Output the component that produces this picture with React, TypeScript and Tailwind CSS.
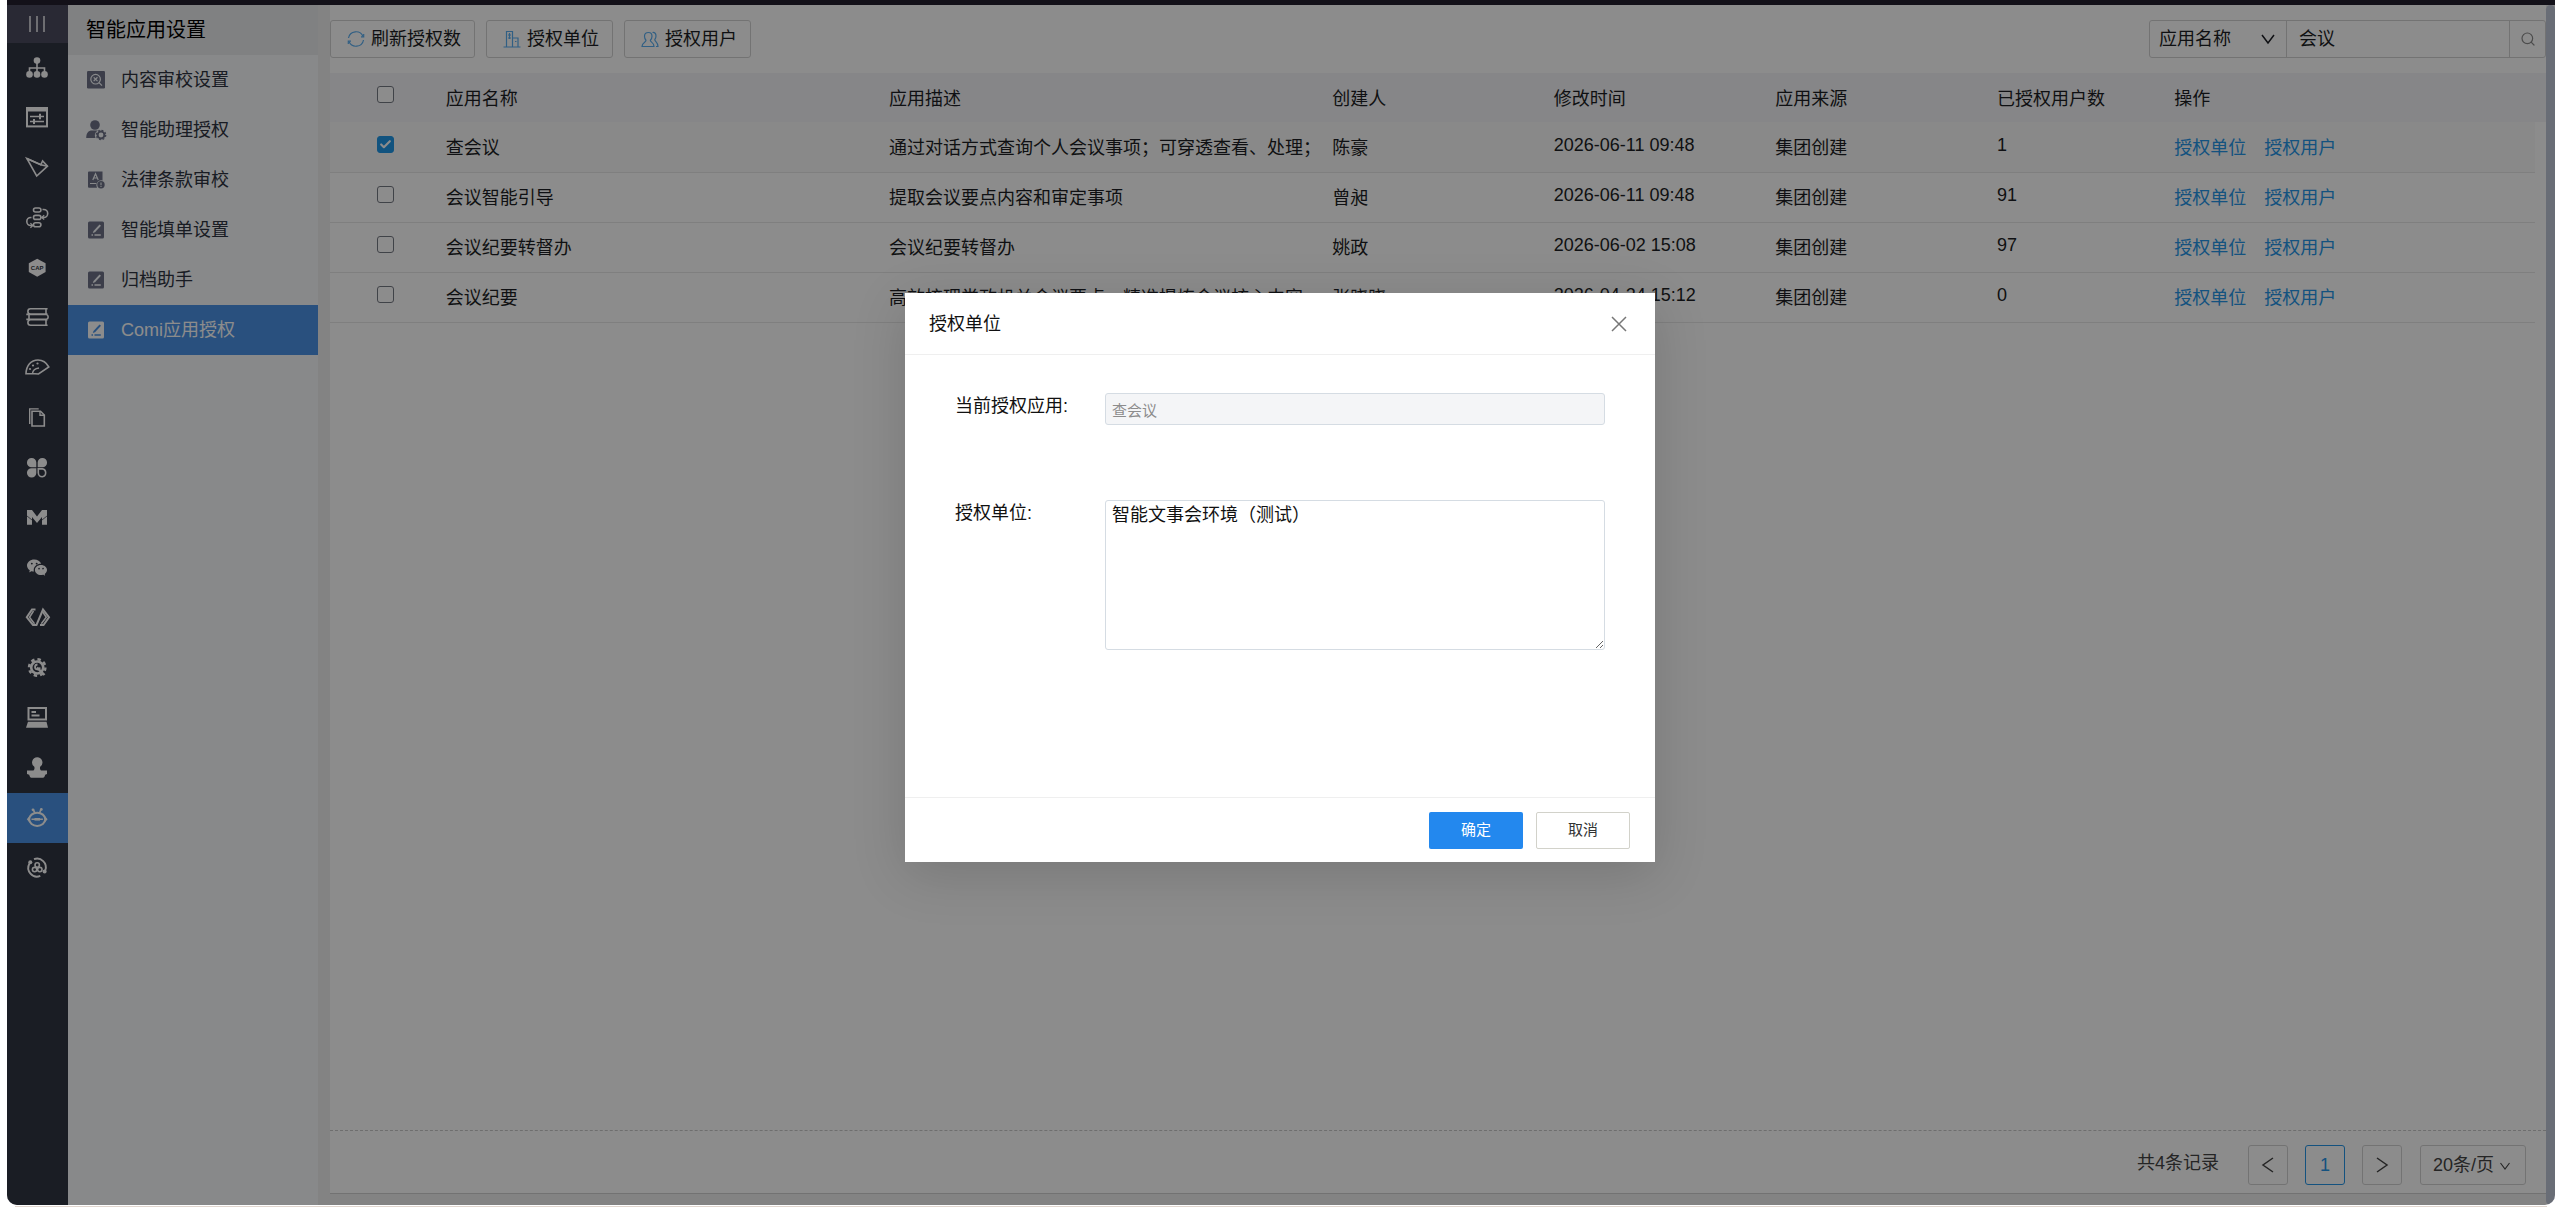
import { useState } from 'react'
import type { ReactNode } from 'react'
import { Check, Search } from 'lucide-react'
import { BsWechat } from 'react-icons/bs'

interface AppRow {
  id: number
  name: string
  description: string
  creator: string
  updatedAt: string
  source: string
  users: number
}

const rows: AppRow[] = [
  { id: 1, name: '查会议', description: '通过对话方式查询个人会议事项；可穿透查看、处理；', creator: '陈豪', updatedAt: '2026-06-11 09:48', source: '集团创建', users: 1 },
  { id: 2, name: '会议智能引导', description: '提取会议要点内容和审定事项', creator: '曾昶', updatedAt: '2026-06-11 09:48', source: '集团创建', users: 91 },
  { id: 3, name: '会议纪要转督办', description: '会议纪要转督办', creator: '姚政', updatedAt: '2026-06-02 15:08', source: '集团创建', users: 97 },
  { id: 4, name: '会议纪要', description: '高效梳理党政机关会议要点，精准提炼会议核心内容', creator: '张晓晓', updatedAt: '2026-04-24 15:12', source: '集团创建', users: 0 },
]

function RailIcon({ children }: { children: ReactNode }) {
  return (
    <svg viewBox="0 0 22 22" className="h-[22px] w-[22px] overflow-visible" fill="none" stroke="currentColor" strokeWidth="1.6">
      {children}
    </svg>
  )
}

const railItems: { label: string; icon: ReactNode }[] = [
  {
    label: '组织',
    icon: (
      <RailIcon>
        <path d="M11 5v12M3.5 16v-5h15v5" />
        <g fill="currentColor" stroke="none">
          <circle cx="11" cy="3.6" r="3.3" />
          <circle cx="3.5" cy="17.4" r="3.3" />
          <circle cx="11" cy="17.4" r="3.3" />
          <circle cx="18.5" cy="17.4" r="3.3" />
        </g>
      </RailIcon>
    ),
  },
  {
    label: '表单',
    icon: (
      <RailIcon>
        <rect x="1" y="1" width="20" height="18.4" strokeWidth="2" />
        <path d="M0 2.5h22" strokeWidth="4" />
        <path d="M4 9.5h14M4 14.5h14" strokeWidth="1.5" />
        <path d="M14 6.8v5.4M8 12v5" strokeWidth="2" />
      </RailIcon>
    ),
  },
  {
    label: '消息',
    icon: (
      <RailIcon>
        <path d="M.8 1.4 10.7 19 21.5 9.2 16.6 4l-1.8 3.8z" />
        <path d="M.8 1.4 14.8 7.8l6.7 1.4" />
      </RailIcon>
    ),
  },
  {
    label: '流程',
    icon: (
      <RailIcon>
        <rect x="7.5" y="1" width="7.4" height="4" rx="2" />
        <rect x="7.5" y="8.4" width="7.4" height="4" rx="2" />
        <rect x="7.5" y="15.8" width="7.4" height="4" rx="2" />
        <path d="M16.5 2.5h1.2a4 4 0 0 1 0 8H16M5.5 10.5H4.8a4 4 0 0 0 0 8h1.6" />
        <path d="m18.2 8.2-2.4 2.2 2.4 2.2M4.4 16.2l2.4 2.3-2.4 2.2" strokeWidth="1.3" />
      </RailIcon>
    ),
  },
  {
    label: 'CAP',
    icon: (
      <RailIcon>
        <path d="m11.2 1.7 8.4 4.6v8.8l-8.4 4.6-8.4-4.6V6.3z" fill="currentColor" stroke="none" />
        <text x="11.2" y="13" textAnchor="middle" fontSize="6" fontWeight="700" fill="#313543" stroke="none">CAP</text>
      </RailIcon>
    ),
  },
  {
    label: '档案',
    icon: (
      <RailIcon>
        <path d="M21.6 1.8H4.5a2.6 2.6 0 0 0 0 5.2h17M20 2v5M.3 7.4h20a2.6 2.6 0 0 1 0 5H.3M3 7.5v5M21.6 12.8h-17a2.6 2.6 0 0 0 0 5.4h17M20 13v5" />
      </RailIcon>
    ),
  },
  {
    label: '仪表盘',
    icon: (
      <RailIcon>
        <path d="M0 16.7C.2 8.5 5 3 12 3c4.800 0 8.5 2.700 10.800 7L12.500 17l-3.500-.3z" />
        <path d="M6.500 16.500c.3-3.500 2.500-5 6.500-5.500" strokeWidth="1.4" />
        <g fill="currentColor" stroke="none">
          <circle cx="4" cy="12" r="1.1" />
          <circle cx="7" cy="8.5" r="1.1" />
          <circle cx="11.5" cy="6.5" r="1.1" />
        </g>
      </RailIcon>
    ),
  },
  {
    label: '文档',
    icon: (
      <RailIcon>
        <path d="M6 4.300h8.500L18.300 8v11H6z" />
        <path d="M14 4.500V8.300h4.200M3.700 17V1.900h9" strokeWidth="1.4" />
      </RailIcon>
    ),
  },
  {
    label: '应用',
    icon: (
      <RailIcon>
        <path d="M5.600 1a4.600 4.600 0 0 1 4.700 4.600v4.700H5.600A4.600 4.600 0 0 1 5.600 1zM16.400 1a4.600 4.600 0 0 1 0 9.300h-4.700V5.600A4.600 4.600 0 0 1 16.400 1zM5.600 20.500a4.600 4.600 0 0 1 0-9.300h4.700v4.700a4.600 4.600 0 0 1-4.700 4.600z" fill="currentColor" stroke="none" />
        <path d="M16.300 19.800a4 4 0 0 1-4-4v-3.900h4a4 4 0 0 1 0 7.900z" />
      </RailIcon>
    ),
  },
  {
    label: '移动',
    icon: (
      <RailIcon>
        <path d="M1 17.700V3h5l5 6.500L16 3h5v14.700h-5V10l-5 6-5-6v7.700z" fill="currentColor" stroke="none" />
        <path d="m1 9 5 4M21 9l-5 4" stroke="#313543" strokeWidth=".7" />
      </RailIcon>
    ),
  },
  { label: '微信', icon: <BsWechat size={22} className="pb-0.5" /> },
  {
    label: '开发',
    icon: (
      <RailIcon>
        <path d="M9.500 2.500H6L.8 10.300 7 18h3.500L17 2.500l6 7.800L17.500 18H14" strokeWidth="2" />
        <path d="m7.500 4-4 6.300 5 6.500M16.800 5l3.500 5.300-5 6.500" strokeWidth="1.5" />
      </RailIcon>
    ),
  },
  {
    label: '系统维护',
    icon: (
      <RailIcon>
        <circle cx="11.2" cy="10.5" r="8.2" strokeWidth="2.4" strokeDasharray="3.44 3" />
        <circle cx="11.2" cy="10.5" r="6" strokeWidth="2.6" />
        <path d="m11 10.500 7.500 7.500" strokeWidth="2.4" />
        <path d="M11.500 7.500a2.500 2.500 0 1 0 2.500 3" strokeWidth="1.8" />
      </RailIcon>
    ),
  },
  {
    label: '门户',
    icon: (
      <RailIcon>
        <rect x="2.5" y="1" width="17.5" height="11.5" strokeWidth="2" />
        <path d="M5.500 5H10M5.500 8.500h8" strokeWidth="1.8" />
        <path d="M2 14.800h18.500l1.500 6H0z" fill="currentColor" stroke="none" />
      </RailIcon>
    ),
  },
  {
    label: '印章',
    icon: (
      <RailIcon>
        <path d="M11.200.3a5.200 5.200 0 0 1 3.200 9.300c-.8.800-.4 3.100.6 3.900h6v3.600l-1.800.6c-.6 2-1 3-2.200 3H5.400c-1.200 0-1.600-1-2.200-3L1 17.100v-3.600h6.500c1-.8 1.400-3.100.6-3.900A5.200 5.200 0 0 1 11.200.3z" fill="currentColor" stroke="none" />
      </RailIcon>
    ),
  },
  {
    label: '智能应用',
    icon: (
      <RailIcon>
        <ellipse cx="11.2" cy="12.3" rx="8" ry="6.6" strokeWidth="2" />
        <path d="M9 6 7.400 3M13.500 6 15 2.200M5.500 12.300h11.400" />
        <path d="M8.500 12.300h5.500" strokeWidth="2.6" />
        <g fill="currentColor" stroke="none">
          <circle cx="7" cy="2.8" r="1.4" />
          <circle cx="15.3" cy="2.4" r="1.4" />
          <path d="M3.500 9v6.600L.8 12.300zM18.900 9v6.600l2.700-3.300z" />
        </g>
      </RailIcon>
    ),
  },
  {
    label: '集成',
    icon: (
      <RailIcon>
        <path d="M8 2.200a8.700 8.700 0 0 1 11.300 11M14.300 18.900A8.700 8.700 0 0 1 3.500 6.500" strokeWidth="1.9" />
        <g fill="currentColor" stroke="none">
          <circle cx="4.3" cy="5.2" r="2" />
          <circle cx="18.6" cy="14.5" r="2" />
        </g>
        <circle cx="11.2" cy="8" r="2.2" />
        <circle cx="8.6" cy="12.6" r="2.2" />
        <circle cx="13.8" cy="12.6" r="2.2" />
      </RailIcon>
    ),
  },
]

function EditIcon({ cut }: { cut: string }) {
  return (
    <svg viewBox="0 0 18 18" className="h-[18px] w-[18px]">
      <rect x="1" y="0.5" width="16" height="17" rx="1.5" fill="currentColor" />
      <path d="m6.500 10 6-6.500L14 4.800l-6 6.500-2.200.6z" fill={cut} />
      <path d="M4.500 14H6M7.500 14h6.300" stroke={cut} strokeWidth="1.3" />
    </svg>
  )
}

const menuItems: { label: string; icon: ReactNode }[] = [
  {
    label: '内容审校设置',
    icon: (
      <svg viewBox="0 0 18 18" className="h-[18px] w-[18px]" fill="none" stroke="#f7f9fc" strokeWidth="1.2">
        <rect x="0" y="0" width="18" height="17.5" rx="1.2" fill="currentColor" stroke="none" />
        <circle cx="8.6" cy="8.2" r="4.8" />
        <path d="m12 11.700 3 3M6.700 6.300l3.800 3.800M10.500 6.300 6.700 10" />
      </svg>
    ),
  },
  {
    label: '智能助理授权',
    icon: (
      <svg viewBox="0 0 18 18" className="h-[18px] w-[18px] overflow-visible">
        <circle cx="8" cy="4" r="4.8" fill="currentColor" />
        <path d="M-.8 17c0-5 2-7.500 6-7.500h5.600A6 6 0 0 0 8.500 17z" fill="currentColor" />
        <circle cx="14" cy="14" r="3.4" fill="none" stroke="currentColor" strokeWidth="2" />
        <circle cx="14" cy="14" r="4.7" fill="none" stroke="currentColor" strokeWidth="1.3" strokeDasharray="1.85 1.84" />
      </svg>
    ),
  },
  {
    label: '法律条款审校',
    icon: (
      <svg viewBox="0 0 18 18" className="h-[18px] w-[18px]" fill="none">
        <path d="M2 .5h13.500v9a5 5 0 0 0-5.500 7.300H2a1 1 0 0 1-1-1V1.500a1 1 0 0 1 1-1z" fill="currentColor" />
        <path d="M5.800 9 8.500 2.800 11.200 9M6.800 7h3.400M3 12.500h6.500" stroke="#f7f9fc" strokeWidth="1.2" />
        <circle cx="14" cy="13.8" r="3.7" fill="currentColor" />
        <path d="M14 11.600v2.600M14 15v1" stroke="#f7f9fc" strokeWidth="1.1" />
      </svg>
    ),
  },
  { label: '智能填单设置', icon: <EditIcon cut="#f7f9fc" /> },
  { label: '归档助手', icon: <EditIcon cut="#f7f9fc" /> },
  { label: 'Comi应用授权', icon: <EditIcon cut="#4b93e5" /> },
]

const toolbarItems: { label: string; icon: ReactNode }[] = [
  {
    label: '刷新授权数',
    icon: (
      <>
        <path d="M1.500 8A7.600 7.600 0 0 1 16 6.500M16.500 10A7.600 7.600 0 0 1 2 11.500" />
        <path d="M16.700 4v2.800H14M1.300 14v-2.800H4" />
      </>
    ),
  },
  {
    label: '授权单位',
    icon: <path d="M3.500 17V1.500h6V17M9.500 8h5.500v9M.5 17h17M5 5h3M5 8h3M6.500 3v6M12 11.500h1.500" />,
  },
  {
    label: '授权用户',
    icon: (
      <>
        <path d="M7.500 2.500c2.500 0 3.500 1.500 3.500 3.800 0 1.800-.6 3-1.700 3.900-.3 2 3.700 2 3.700 6.300H1c0-4.300 4.500-4.300 4-6.300-1-.9-1.500-2.100-1.500-3.900 0-2.300 1.500-3.800 4-3.800z" />
        <path d="M11.500 2.500c2.300-.3 3.500 1 3.500 3.600 0 1.600-.5 2.600-1.200 3.400-.2 2 3.200 2.500 3.200 7h-2" />
      </>
    ),
  },
]

const arrows = {
  down: 'm2 4 6 8 6-8',
  left: 'M13 1 3 8l10 7',
  right: 'm3 1 10 7-10 7',
}

function Arrow({ to, className = '' }: { to: keyof typeof arrows; className?: string }) {
  return (
    <svg viewBox="0 0 16 16" className={className} fill="none" stroke="currentColor" strokeWidth="1.5">
      <path d={arrows[to]} />
    </svg>
  )
}

function CheckBox({ label, checked, onChange }: { label: string; checked: boolean; onChange: () => void }) {
  return (
    <label className="relative inline-block h-[17px] w-[17px] align-middle">
      <input
        type="checkbox"
        aria-label={label}
        checked={checked}
        onChange={onChange}
        className="block h-full w-full appearance-none rounded-[3px] border border-[#767a84] bg-white checked:border-[#1f97e8] checked:bg-[#1f97e8]"
      />
      {checked && <Check size={13} strokeWidth={4} className="pointer-events-none absolute left-0.5 top-0.5 text-white" />}
    </label>
  )
}

function AuthorizeModal({ onClose }: { onClose: () => void }) {
  const [units, setUnits] = useState('智能文事会环境（测试）')

  return (
    <div role="dialog" aria-label="授权单位" className="w-[750px] bg-white text-lg text-[#111] shadow-[0_12px_50px_rgba(0,0,0,0.15)]">
      <div className="flex h-[62px] items-center justify-between border-b border-[#efefef] pl-6 pr-7">
        <h2>授权单位</h2>
        <button aria-label="关闭" onClick={onClose} className="text-[#777]">
          <svg viewBox="0 0 16 16" className="h-4 w-4" stroke="currentColor" strokeWidth="1.5">
            <path d="m1 1 14 14M15 1 1 15" />
          </svg>
        </button>
      </div>

      <form className="space-y-[75px] px-[50px] pb-[147px] pt-[38px]">
        <div className="flex">
          <label htmlFor="current-app" className="w-[150px] leading-[26px]">当前授权应用:</label>
          <input
            id="current-app"
            disabled
            value="查会议"
            className="h-8 w-[500px] rounded-[3px] border border-[#d5dce3] bg-[#f4f5f7] px-1.5 text-[15px] text-[#8c8c8c]"
          />
        </div>
        <div className="flex">
          <label htmlFor="units" className="w-[150px] leading-[26px]">授权单位:</label>
          <textarea
            id="units"
            value={units}
            onChange={(e) => setUnits(e.target.value)}
            className="block h-[150px] w-[500px] rounded-[3px] border border-[#d5dce3] px-1.5 leading-7 outline-none"
          />
        </div>
      </form>

      <div className="flex h-[65px] items-center justify-end gap-[13px] border-t border-[#efefef] px-[25px] text-[15px]">
        <button onClick={onClose} className="h-[37px] w-[94px] rounded-[2px] bg-[#2388ee] text-white">确定</button>
        <button onClick={onClose} className="h-[37px] w-[94px] rounded-[2px] border border-[#d2d2ca] text-[#333]">取消</button>
      </div>
    </div>
  )
}

export default function App() {
  const [selected, setSelected] = useState<number[]>([1])
  const [keyword, setKeyword] = useState('会议')
  const [open, setOpen] = useState(true)

  const toggle = (id: number) => {
    setSelected(selected.includes(id) ? selected.filter((s) => s !== id) : [...selected, id])
  }

  return (
    <div className="flex h-screen flex-col bg-white pl-[7px] pr-[5px] font-['Liberation_Sans','Noto_Sans_CJK_SC',sans-serif] text-lg leading-6 text-[#1c1e24]">
      <div className="relative flex min-h-0 flex-1 flex-col overflow-hidden rounded-b-[10px] bg-[#eeeeee]">
        <div className="h-[5px] shrink-0 bg-[#241f2f]" />

        <div className="flex min-h-0 flex-1">
          <nav className="w-[61px] shrink-0 bg-[#313543] text-white">
            <button aria-label="展开菜单" className="flex h-[38px] w-full items-center justify-center gap-[5px] bg-[#4c4b60] pr-0.5">
              <span className="h-4 w-0.5 bg-white/70" />
              <span className="h-4 w-0.5 bg-white/70" />
              <span className="h-4 w-0.5 bg-white/70" />
            </button>
            {railItems.map((item) => (
              <button
                key={item.label}
                aria-label={item.label}
                className={`flex h-[50px] w-full items-center justify-center pr-0.5 ${item.label === '智能应用' ? 'bg-[#4b93e5]' : ''}`}
              >
                {item.icon}
              </button>
            ))}
          </nav>

          <aside className="w-[250px] shrink-0 bg-[#f7f9fc]">
            <h1 className="flex h-[50px] items-center bg-[#eaeced] pl-[18px] text-xl text-black">智能应用设置</h1>
            <ul>
              {menuItems.map((item) => {
                const active = item.label === 'Comi应用授权'
                return (
                  <li key={item.label}>
                    <a
                      href="#"
                      className={`flex h-[50px] items-center gap-4 pl-[19px] ${active ? 'bg-[#4b93e5] text-white' : 'text-[#6d7288]'}`}
                    >
                      {item.icon}
                      <span className={active ? '' : 'text-[#2f3440]'}>{item.label}</span>
                    </a>
                  </li>
                )
              })}
            </ul>
          </aside>

          <main className="mb-[11px] ml-3 flex min-w-0 flex-1 flex-col border-b border-[#d0d0d0] bg-white">
            <div className="flex h-[68px] shrink-0 items-center justify-between">
              <div className="flex gap-[11px]">
                {toolbarItems.map((item) => (
                  <button
                    key={item.label}
                    onClick={() => setOpen(true)}
                    className="flex h-[38px] items-center gap-1.5 rounded-[3px] border border-[#d2d2d2] pl-4 pr-[13px]"
                  >
                    <svg viewBox="0 0 18 18" className="h-[18px] w-[18px]" fill="none" stroke="#5aaef0" strokeWidth="1.2">
                      {item.icon}
                    </svg>
                    {item.label}
                  </button>
                ))}
              </div>

              <div className="flex h-[38px] w-[397px] rounded-[3px] border border-[#d2d2d2]">
                <div className="relative w-[137px] border-r border-[#d2d2d2]">
                  <select aria-label="查询条件" className="h-full w-full appearance-none bg-transparent px-[9px]">
                    <option>应用名称</option>
                    <option>创建人</option>
                  </select>
                  <Arrow to="down" className="pointer-events-none absolute right-2.5 top-2.5 h-4 w-4" />
                </div>
                <input
                  aria-label="关键字"
                  value={keyword}
                  onChange={(e) => setKeyword(e.target.value)}
                  className="min-w-0 flex-1 px-3 outline-none"
                />
                <button aria-label="搜索" className="flex w-9 items-center justify-center border-l border-[#d2d2d2] text-[#8a8a8a]">
                  <Search size={16} strokeWidth={1.8} />
                </button>
              </div>
            </div>

            <div className="min-h-0 flex-1">
              <table className="w-full table-fixed text-left">
                <colgroup>
                  <col className="w-[5%]" />
                  <col className="w-[20%]" />
                  <col className="w-[20%]" />
                  <col className="w-[10%]" />
                  <col className="w-[10%]" />
                  <col className="w-[10%]" />
                  <col className="w-[8%]" />
                  <col />
                  <col className="w-[11px]" />
                </colgroup>
                <thead>
                  <tr className="h-[49px] bg-[#f4f4f8]">
                    <th className="pb-2 text-center font-normal">
                      <CheckBox label="全选" checked={false} onChange={() => setSelected(rows.map((r) => r.id))} />
                    </th>
                    {['应用名称', '应用描述', '创建人', '修改时间', '应用来源', '已授权用户数', '操作'].map((title) => (
                      <th key={title} className="pl-[5px] pt-0.5 font-normal">{title}</th>
                    ))}
                    <th />
                  </tr>
                </thead>
                <tbody>
                  {rows.map((row) => (
                    <tr key={row.id} className={selected.includes(row.id) ? '[&>td:not(:last-child)]:bg-[#fafafa]' : ''}>
                      <td className="h-[50px] border-b border-[#e8e8e8] pb-2 text-center">
                        <CheckBox label={row.name} checked={selected.includes(row.id)} onChange={() => toggle(row.id)} />
                      </td>
                      <td className="border-b border-[#e8e8e8] pl-[5px] pt-0.5">{row.name}</td>
                      <td className="truncate border-b border-[#e8e8e8] pl-[5px] pt-0.5">{row.description}</td>
                      <td className="border-b border-[#e8e8e8] pl-[5px] pt-0.5">{row.creator}</td>
                      <td className="border-b border-[#e8e8e8] pb-1 pl-[5px]">{row.updatedAt}</td>
                      <td className="border-b border-[#e8e8e8] pl-[5px] pt-0.5">{row.source}</td>
                      <td className="border-b border-[#e8e8e8] pb-1 pl-[5px]">{row.users}</td>
                      <td className="border-b border-[#e8e8e8] pl-[5px] pt-0.5 text-[#2596e8]">
                        <a href="#" className="mr-[18px]">授权单位</a>
                        <a href="#">授权用户</a>
                      </td>
                      <td />
                    </tr>
                  ))}
                </tbody>
              </table>
            </div>

            <div className="flex h-[63px] shrink-0 items-center justify-end border-t border-dashed border-[#c8c8c8] pr-5 pt-1.5 text-[#444]">
              <span className="mr-[29px] pb-1">共4条记录</span>
              <button aria-label="上一页" className="mr-[17px] flex h-10 w-10 items-center justify-center rounded-[3px] border border-[#d2d2d2]">
                <Arrow to="left" className="h-4 w-4" />
              </button>
              <button className="mr-[17px] h-10 w-10 rounded-[3px] border border-[#2596e8] text-[#2596e8]">1</button>
              <button aria-label="下一页" className="mr-[18px] flex h-10 w-10 items-center justify-center rounded-[3px] border border-[#d2d2d2]">
                <Arrow to="right" className="h-4 w-4" />
              </button>
              <div className="relative h-10 w-[106px] rounded-[3px] border border-[#d2d2d2]">
                <select aria-label="每页条数" className="h-full w-full appearance-none bg-transparent pl-3">
                  <option>20条/页</option>
                  <option>50条/页</option>
                </select>
                <Arrow to="down" className="pointer-events-none absolute right-3.5 top-3.5 h-3 w-3" />
              </div>
            </div>
          </main>

          <div className="w-[9px] shrink-0 rounded-full bg-[#c0c6d8]" />
        </div>

        {open && (
          <div className="absolute inset-0 flex items-start justify-center bg-black/45 pr-0.5 pt-[293px]">
            <AuthorizeModal onClose={() => setOpen(false)} />
          </div>
        )}
      </div>
      <div className="mx-2 mb-0.5 mt-px h-px shrink-0 bg-[#e0d6cf]" />
    </div>
  )
}
